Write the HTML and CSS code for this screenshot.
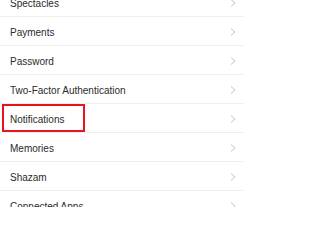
FILE: index.html
```html
<!DOCTYPE html>
<html>
<head>
<meta charset="utf-8">
<link rel="stylesheet" href="styles.css">
</head>
<body>
<ul class="list">
  <li class="row"><span class="label">Spectacles</span><svg class="chev" viewBox="0 0 6 8"><path d="M1 0.5 L5 4 L1 7.5"/></svg></li>
  <li class="row"><span class="label">Payments</span><svg class="chev" viewBox="0 0 6 8"><path d="M1 0.5 L5 4 L1 7.5"/></svg></li>
  <li class="row"><span class="label">Password</span><svg class="chev" viewBox="0 0 6 8"><path d="M1 0.5 L5 4 L1 7.5"/></svg></li>
  <li class="row"><span class="label">Two-Factor Authentication</span><svg class="chev" viewBox="0 0 6 8"><path d="M1 0.5 L5 4 L1 7.5"/></svg></li>
  <li class="row highlighted"><span class="label">Notifications</span><svg class="chev" viewBox="0 0 6 8"><path d="M1 0.5 L5 4 L1 7.5"/></svg><span class="mark"></span></li>
  <li class="row"><span class="label">Memories</span><svg class="chev" viewBox="0 0 6 8"><path d="M1 0.5 L5 4 L1 7.5"/></svg></li>
  <li class="row"><span class="label">Shazam</span><svg class="chev" viewBox="0 0 6 8"><path d="M1 0.5 L5 4 L1 7.5"/></svg></li>
  <li class="row"><span class="label">Connected Apps</span><svg class="chev" viewBox="0 0 6 8"><path d="M1 0.5 L5 4 L1 7.5"/></svg></li>
</ul>
</body>
</html>
```
FILE: styles.css
```css
html, body {
  margin: 0;
  padding: 0;
  background: #ffffff;
  overflow: hidden;
}
body {
  width: 244px;
  height: 207px;
  font-family: "Liberation Sans", Arial, sans-serif;
}
.list {
  list-style: none;
  margin: -12px 0 0 0;
  padding: 0;
}
.row {
  position: relative;
  display: flex;
  align-items: center;
  justify-content: space-between;
  height: 28px;
  padding: 0 8px 0 10px;
  border-bottom: 1px solid #efefef;
}
.label {
  font-size: 10px;
  color: #2b2b2b;
  padding-top: 2px;
}
.chev {
  width: 6px;
  height: 8px;
  margin-top: 2px;
  fill: none;
  stroke: #c4c4c4;
  stroke-width: 1;
}
.mark {
  position: absolute;
  left: 2px;
  top: 0;
  width: 83px;
  height: 28px;
  box-sizing: border-box;
  border: 2px solid #e8141c;
}
```
